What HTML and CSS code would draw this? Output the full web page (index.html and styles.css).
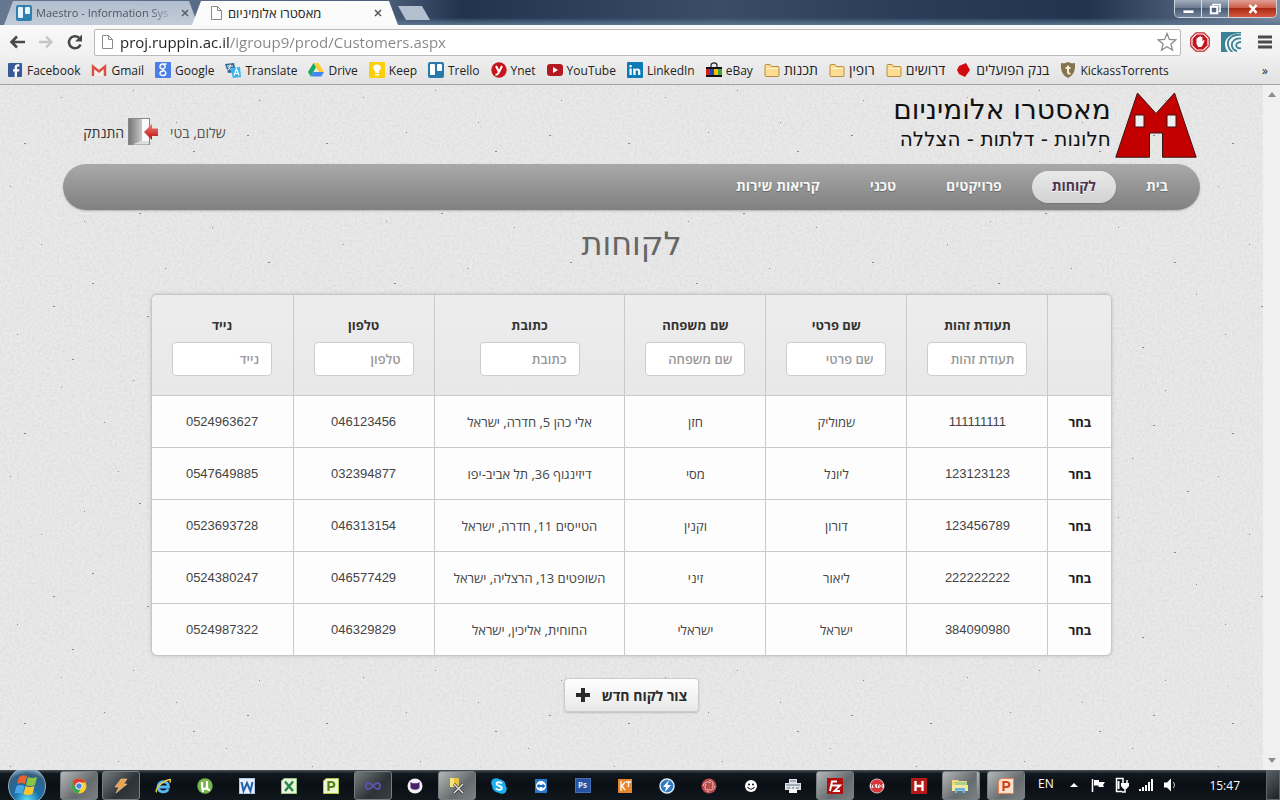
FILE: index.html
```html
<!DOCTYPE html>
<html lang="he">
<head>
<meta charset="utf-8">
<title>מאסטרו אלומיניום</title>
<link rel="stylesheet" href="styles.css">
</head>
<body>
<header class="browser">
  <div class="titlebar">
    <div class="tabs">
      <div class="tab">
        <svg class="icon" viewBox="0 0 16 16"><rect width="16" height="16" rx="2" fill="#2f80b0"/><rect x="2" y="2" width="5" height="11" rx="1" fill="#e9f3fa"/><rect x="9" y="2" width="5" height="7" rx="1" fill="#e9f3fa"/></svg>
        <span class="tab-title fade">Maestro - Information Sys</span>
        <button class="tab-close" aria-label="Close tab"><svg viewBox="0 0 8 8"><path d="M1 1l6 6M7 1L1 7" stroke="#5a5f68" stroke-width="1.6"/></svg></button>
      </div>
      <div class="tab tab-active">
        <svg class="icon" viewBox="0 0 16 16"><path d="M3.500 1.500h6l4 4v9h-10zM9.500 1.500v4h4" fill="#fff" stroke="#8a8a8a"/></svg>
        <span class="tab-title" dir="rtl">מאסטרו אלומיניום</span>
        <button class="tab-close" aria-label="Close tab"><svg viewBox="0 0 8 8"><path d="M1 1l6 6M7 1L1 7" stroke="#5a5a5a" stroke-width="1.6"/></svg></button>
      </div>
      <button class="new-tab" aria-label="New tab"></button>
    </div>
    <div class="window-buttons">
      <button aria-label="Minimize"><svg viewBox="0 0 14 12"><rect x="2" y="7" width="11" height="3.500" fill="#fff" stroke="#4a5468" stroke-width=".7"/></svg></button>
      <button aria-label="Restore"><svg viewBox="0 0 14 12"><path d="M5 3V1.500h7v7h-1.500" fill="none" stroke="#fff" stroke-width="1.600"/><rect x="2.800" y="3.800" width="6.500" height="6.500" fill="none" stroke="#fff" stroke-width="2"/></svg></button>
      <button class="window-close" aria-label="Close"><svg viewBox="0 0 14 12"><path d="M3.500 2l7 8M10.500 2l-7 8" stroke="#fff" stroke-width="2.600"/></svg></button>
    </div>
  </div>
  <div class="toolbar">
    <button class="tool" aria-label="Back"><svg viewBox="0 0 18 18"><path d="M17 9H4M9 3.500L3.500 9 9 14.500" fill="none" stroke="#484848" stroke-width="2.600"/></svg></button>
    <button class="tool" aria-label="Forward"><svg viewBox="0 0 18 18"><path d="M2 9h12M9 3.500L14.500 9 9 14.500" fill="none" stroke="#c6c6c6" stroke-width="2.400"/></svg></button>
    <button class="tool" aria-label="Reload"><svg viewBox="0 0 18 18"><path d="M14.500 11.500A6 6 0 1 1 13 4.800" fill="none" stroke="#484848" stroke-width="2.600"/><path d="M16 1.500v7H9z" fill="#484848"/></svg></button>
    <div class="address">
      <svg class="icon" viewBox="0 0 16 16"><path d="M2.500 1.500h6l4 4v9h-10zM8.500 1.500v4h4" fill="#fff" stroke="#8a8a8a"/></svg>
      <input class="url" type="text" aria-label="Address" value="proj.ruppin.ac.il/igroup9/prod/Customers.aspx">
      <button class="star" aria-label="Bookmark"><svg viewBox="0 0 20 20"><path d="M10 1.500l2.400 5.900 6.400.4-4.900 4.100 1.600 6.200-5.500-3.400-5.500 3.400 1.600-6.200L1.200 7.800l6.400-.4z" fill="#fff" stroke="#8d8d8d" stroke-width="1.300"/></svg></button>
    </div>
    <button class="ext" aria-label="AdBlock"><svg viewBox="0 0 20 20"><path d="M6 .8h8L19.200 6v8L14 19.200H6L.8 14V6z" fill="#fff" stroke="#b9242b" stroke-width="1.200"/><path d="M6.800 2.600h6.400l4.200 4.200v6.400l-4.200 4.200H6.800l-4.200-4.200V6.800z" fill="#c3161d"/><path d="M6.500 9.500V6.200h1.400V5h1.600v-.8h1.400V5h1.500v4.500l1.200-1.500 1 .6-2 4.600-1.400 1.800H8.300L6.500 12z" fill="#fff"/></svg></button>
    <button class="ext" aria-label="Extension"><svg viewBox="0 0 20 20"><rect width="20" height="20" fill="#f3f6f7"/><path d="M0 0h20v1C10 1 4 6 4 12c0 3 1 6 3 8H0z" fill="#3c8296"/><path d="M20 2.500C11 2.500 6 7 7 13c.5 3 2 5.500 4.500 7M20 6.500c-6-.5-10 3-9 7.500.5 2.500 2.500 4.500 5 5M20 10c-3.500 0-5.500 2-4.500 4.500.5 1.500 2.500 2 4.500 1.500" fill="none" stroke="#3c8296" stroke-width="1.800"/></svg></button>
    <button class="menu" aria-label="Menu"><svg viewBox="0 0 14 14"><path d="M0 2h14M0 7h14M0 12h14" stroke="#4a4a4a" stroke-width="2.800"/></svg></button>
  </div>
  <nav class="bookmarks" aria-label="Bookmarks">
    <a href="#"><svg class="icon" viewBox="0 0 16 16"><rect x="1" y="1" width="14" height="14" rx="1" fill="#3b5998"/><path d="M10 15V9.500h2l.4-2.300H10V5.700c0-.8.300-1.200 1.200-1.200h1.200V2.400C10 2 7.700 2.300 7.700 5.300v1.900H6v2.300h1.700V15z" fill="#fff"/></svg>Facebook</a>
    <a href="#"><svg class="icon" viewBox="0 0 16 16"><rect x="1" y="3" width="14" height="11" fill="#f2f0ef"/><path d="M2 14V4.500l6 5 6-5V14" fill="none" stroke="#d9503f" stroke-width="2.400"/></svg>Gmail</a>
    <a href="#"><svg class="icon" viewBox="0 0 16 16"><rect width="16" height="16" rx="1" fill="#4a7ee8"/><path d="M11.500 2H7.500C4.500 2 4 6.500 7 6.900l1 .2M7.800 2.200c3 0 3 4.700.2 4.700v1.200c4 1.500 3.500 5.400 0 5.400-4.200 0-4-4.500.5-4.500" fill="none" stroke="#fff" stroke-width="1.400"/></svg>Google</a>
    <a href="#"><svg class="icon" viewBox="0 0 16 16"><path d="M0 2l9-1 2 9-8 1z" fill="#35678f"/><path d="M2 4h6M5 2.500V4c0 2-1 3.500-3 4.500M3 5c1 2 3 3 5 3.500" fill="none" stroke="#fff"/><path d="M5 6l10-1 1 10-8 1z" fill="#3cb3ef"/><path d="M9 13.500L11.500 7l2.500 6.500M9.800 11.500h3.400" fill="none" stroke="#fff" stroke-width="1.200"/></svg>Translate</a>
    <a href="#"><svg class="icon" viewBox="0 0 16 16"><path d="M5.500 1h5l5.500 9h-5z" fill="#fc3"/><path d="M5.500 1L8 5.300 2.700 14.500 0 10z" fill="#16a765"/><path d="M5.300 10H16l-2.700 4.500H2.700z" fill="#4285f4"/></svg>Drive</a>
    <a href="#"><svg class="icon" viewBox="0 0 16 16"><rect width="16" height="16" rx="1" fill="#fbcf0a"/><path d="M8 2.500c5 0 4.500 5 2 6.500v2H6V9C3.500 7.500 3 2.500 8 2.500zM6 12h4v1.500H6z" fill="#fff"/></svg>Keep</a>
    <a href="#"><svg class="icon" viewBox="0 0 16 16"><rect width="16" height="16" rx="2" fill="#267baa"/><rect x="2" y="2" width="5" height="11" rx="1" fill="#fff"/><rect x="9" y="2" width="5" height="7" rx="1" fill="#fff"/></svg>Trello</a>
    <a href="#"><svg class="icon" viewBox="0 0 16 16"><circle cx="8" cy="8" r="7.700" fill="#c4161c"/><path d="M5 4l3 6M11 4L8 10c-1 2.500-2 3-3.500 2.800" fill="none" stroke="#fff" stroke-width="2"/></svg>Ynet</a>
    <a href="#"><svg class="icon" viewBox="0 0 16 16"><rect y="2" width="16" height="12" rx="3" fill="#b3191e"/><path d="M6 5l5 3-5 3z" fill="#fff"/></svg>YouTube</a>
    <a href="#"><svg class="icon" viewBox="0 0 16 16"><rect width="16" height="16" rx="1" fill="#0a7bb5"/><path d="M2.500 6.500h2.200V13H2.500zM2.500 3h2.200v2.200H2.500zM6.300 6.500h2v1c1-1.700 5-1.700 5 1.800V13h-2.200V9.700c0-2-2.500-2-2.500 0V13H6.300z" fill="#fff"/></svg>LinkedIn</a>
    <a href="#"><svg class="icon" viewBox="0 0 16 16"><path d="M5 6V3.500C5 0 11 0 11 3.500V6" fill="none" stroke="#222" stroke-width="1.200"/><path d="M0 5h16v3H0z" fill="#111"/><path d="M0 7h4v7H0z" fill="#c22"/><path d="M4 7h4v7H4z" fill="#23479f"/><path d="M8 7h4v7H8z" fill="#f2c714"/><path d="M12 7h4v7h-4z" fill="#4a9f37"/><path d="M0 13h16v2H0z" fill="#111"/></svg>eBay</a>
    <a href="#"><svg class="icon" viewBox="0 0 16 16"><path d="M1 13.500V3.500q0-1 1-1h4l1.500 2H14q1 0 1 1v8q0 1-1 1H2q-1 0-1-1z" fill="#fbdc91" stroke="#b98d43"/><path d="M2 6.500h12" stroke="#fff3cb"/></svg><span class="he" dir="rtl">תכנות</span></a>
    <a href="#"><svg class="icon" viewBox="0 0 16 16"><path d="M1 13.500V3.500q0-1 1-1h4l1.500 2H14q1 0 1 1v8q0 1-1 1H2q-1 0-1-1z" fill="#fbdc91" stroke="#b98d43"/><path d="M2 6.500h12" stroke="#fff3cb"/></svg><span class="he" dir="rtl">רופין</span></a>
    <a href="#"><svg class="icon" viewBox="0 0 16 16"><path d="M1 13.500V3.500q0-1 1-1h4l1.500 2H14q1 0 1 1v8q0 1-1 1H2q-1 0-1-1z" fill="#fbdc91" stroke="#b98d43"/><path d="M2 6.500h12" stroke="#fff3cb"/></svg><span class="he" dir="rtl">דרושים</span></a>
    <a href="#"><svg class="icon" viewBox="0 0 16 16"><path d="M3 4l7-3 4 7-5 7-6-3-2-4z" fill="#d2090f"/></svg><span class="he" dir="rtl">בנק הפועלים</span></a>
    <a href="#"><svg class="icon" viewBox="0 0 16 16"><path d="M8 0c3 1.500 5 1.500 7 1 .5 7-1 12-7 15C2 13 .5 8 1 1c2 .5 4 .5 7-1z" fill="#85754d"/><path d="M8 3.500v7q0 1.500 2.500 1M5.500 6h5" fill="none" stroke="#f3ecd6" stroke-width="2"/></svg>KickassTorrents</a>
    <button class="overflow" aria-label="More bookmarks">»</button>
  </nav>
</header>

<div class="viewport">
  <svg class="paper" aria-hidden="true">
    <defs>
      <filter id="grain" x="0" y="0" width="100%" height="100%"><feTurbulence type="fractalNoise" baseFrequency=".4" numOctaves="2" seed="4"/><feColorMatrix values="0 0 0 0 .5  0 0 0 0 .5  0 0 0 0 .5  .5 0 0 0 -.18"/></filter>
      <pattern id="specks" width="302" height="290" patternUnits="userSpaceOnUse">
        <path d="M24 58.500h2M61 12.500h1M92 198.500h2M118 96.500h1M147 231.500h2M176 37.500h1M193 66.500h2M212 142.500h1M236 262.500h2M259 15.500h1M281 116.500h2M41 159.500h1M72 274.500h2M133 5.500h1M165 183.500h1M290 209.500h1M10 101.500h1M53 221.500h2M104 47.500h1M139 128.500h2M199 217.500h1M226 83.500h1M268 177.500h2M17 249.500h1M84 136.500h1M187 279.500h1M247 50.500h2" stroke="#888"/>
      </pattern>
    </defs>
    <rect width="100%" height="100%" filter="url(#grain)"/>
    <rect width="100%" height="100%" fill="url(#specks)"/>
  </svg>
  <main class="page" dir="rtl">
    <div class="masthead">
      <a class="brand" href="#">
        <svg class="logo" viewBox="0 0 82 66"><path d="M.8 65.200L22.500 1 41 21.500 59.500 1l21.700 64.200H47.500V41h-13v24.200z" fill="#c30000" stroke="#3c1414"/><rect x="20" y="23" width="9" height="12" fill="#efefef" stroke="#3c1414"/><rect x="52" y="23" width="9" height="12" fill="#efefef" stroke="#3c1414"/></svg>
        <span class="brand-text"><span class="brand-name">מאסטרו אלומיניום</span><span class="brand-tag">חלונות - דלתות - הצללה</span></span>
      </a>
      <div class="user">
        <span class="hello">שלום, בטי</span>
        <a class="logout" href="#">
          <svg viewBox="0 0 30 28"><defs><linearGradient id="door"><stop offset="0" stop-color="#777"/><stop offset="1" stop-color="#c8c8c8"/></linearGradient><linearGradient id="arrow" x2="0" y2="1"><stop offset="0" stop-color="#f27a72"/><stop offset="1" stop-color="#b80d0d"/></linearGradient></defs><rect x=".5" y=".5" width="21" height="26" fill="#fafafa" stroke="#888"/><path d="M1 1h13v22L5 26.500H1z" fill="url(#door)"/><path d="M5 26.500L14 23h7v3.500z" fill="#ddd"/><path d="M16 14l8-8v4.500h6v7.500h-6v4z" fill="url(#arrow)"/></svg>
          התנתק</a>
      </div>
    </div>
    <nav class="site-nav">
      <a href="#">בית</a>
      <a class="current" href="#">לקוחות</a>
      <a href="#">פרויקטים</a>
      <a href="#">טכני</a>
      <a href="#">קריאות שירות</a>
    </nav>
    <h1>לקוחות</h1>
    <table class="customers">
      <colgroup><col class="col-pick"><col class="col-data"><col class="col-data"><col class="col-data"><col><col class="col-data"><col class="col-data"></colgroup>
      <thead>
        <tr>
          <th></th>
          <th><label for="f-id">תעודת זהות</label><input id="f-id" type="text" placeholder="תעודת זהות"></th>
          <th><label for="f-first">שם פרטי</label><input id="f-first" type="text" placeholder="שם פרטי"></th>
          <th><label for="f-last">שם משפחה</label><input id="f-last" type="text" placeholder="שם משפחה"></th>
          <th><label for="f-addr">כתובת</label><input id="f-addr" type="text" placeholder="כתובת"></th>
          <th><label for="f-phone">טלפון</label><input id="f-phone" type="text" placeholder="טלפון"></th>
          <th><label for="f-cell">נייד</label><input id="f-cell" type="text" placeholder="נייד"></th>
        </tr>
      </thead>
      <tbody>
        <tr><td><a href="#">בחר</a></td><td>111111111</td><td>שמוליק</td><td>חזן</td><td>אלי כהן 5, חדרה, ישראל</td><td>046123456</td><td>0524963627</td></tr>
        <tr><td><a href="#">בחר</a></td><td>123123123</td><td>ליונל</td><td>מסי</td><td>דיזינגוף 36, תל אביב-יפו</td><td>032394877</td><td>0547649885</td></tr>
        <tr><td><a href="#">בחר</a></td><td>123456789</td><td>דורון</td><td>וקנין</td><td>הטייסים 11, חדרה, ישראל</td><td>046313154</td><td>0523693728</td></tr>
        <tr><td><a href="#">בחר</a></td><td>222222222</td><td>ליאור</td><td>זיני</td><td>השופטים 13, הרצליה, ישראל</td><td>046577429</td><td>0524380247</td></tr>
        <tr><td><a href="#">בחר</a></td><td>384090980</td><td>ישראל</td><td>ישראלי</td><td>החוחית, אליכין, ישראל</td><td>046329829</td><td>0524987322</td></tr>
      </tbody>
    </table>
    <button class="create">צור לקוח חדש<svg viewBox="0 0 14 14"><path d="M7 0v14M0 7h14" stroke="#2b2b2b" stroke-width="4"/></svg></button>
  </main>
  <div class="scrollbar" aria-hidden="true">
    <svg viewBox="0 0 8 5"><path d="M0 5l4-5 4 5z" fill="#8d8d8d"/></svg>
    <svg viewBox="0 0 8 5"><path d="M0 0l4 5 4-5z" fill="#8d8d8d"/></svg>
  </div>
</div>

<footer class="taskbar">
  <button class="start" aria-label="Start"><svg viewBox="0 0 40 40"><defs><radialGradient id="orb" cy=".9" r=".9"><stop offset="0" stop-color="#5fe3ff"/><stop offset=".4" stop-color="#1c6fa8"/><stop offset=".8" stop-color="#355f80"/><stop offset="1" stop-color="#a9c4d8"/></radialGradient></defs><circle cx="20" cy="20" r="18.500" fill="url(#orb)" stroke="#8fb0c6"/><path d="M12 11q4-3 8-1l-2 8q-4-2-8 0z" fill="#e8602c"/><path d="M21 11q4 2 9 0l-2 8q-5 2-9 0z" fill="#8cc63e"/><path d="M9.500 20q4-2 8 0l-2 8q-4-2-8 0z" fill="#4aa5e4"/><path d="M18.500 20q4 2 9 0l-2 8q-5 2-9 0z" fill="#fcc52c"/></svg></button>
  <div class="tasks">
    <button class="open bright" aria-label="Chrome"><svg viewBox="0 0 16 16"><circle cx="8" cy="8" r="7.500" fill="#fbd02c"/><path d="M1.500 4.200A7.500 7.500 0 0 1 14.500 4.500H8L5 10z" fill="#dc3f32"/><path d="M1.500 4.200A7.500 7.500 0 0 0 7 15.400L10.500 10H5z" fill="#3ea450"/><circle cx="8" cy="8" r="3.300" fill="#4b87e0" stroke="#fff"/></svg></button>
    <button class="open" aria-label="Winamp"><svg viewBox="0 0 16 16"><path d="M8 1h6l-3.500 5H14L3 15l3-6H2z" fill="#eda251" stroke="#f8cf9a" stroke-width=".6"/></svg></button>
    <button aria-label="Internet Explorer"><svg viewBox="0 0 16 16"><path d="M4 9h9.500c.3-7-10.500-7-10.500 0 0 6 8.500 6 10 2" fill="none" stroke="#55b8ef" stroke-width="2.800"/><path d="M2 14C-1 14 4 4 15 1.500c1.500 0 .5 2-.5 3" fill="none" stroke="#f5cb40" stroke-width="1.400"/></svg></button>
    <button aria-label="uTorrent"><svg viewBox="0 0 16 16"><circle cx="8" cy="8" r="7.700" fill="#76b64c"/><path d="M5 4v4c0 4 5 4 5 0V3v6q0 3 3 3M5 8l1 6" fill="none" stroke="#fff" stroke-width="2.200"/></svg></button>
    <button aria-label="Word"><svg viewBox="0 0 16 16"><rect x=".5" y=".5" width="15" height="15" fill="#e9f0fa" stroke="#b4c7e4"/><path d="M2.500 4l2 9L8 5l3.500 8 2-9" fill="none" stroke="#2461ad" stroke-width="2"/></svg></button>
    <button aria-label="Excel"><svg viewBox="0 0 16 16"><path d="M3 .5h12.500v15H.5V3z" fill="#e5f3df" stroke="#9ac77c"/><path d="M4 3.500l8 9.500M12 3.500L4 13" stroke="#2a8745" stroke-width="2.400"/></svg></button>
    <button aria-label="Project"><svg viewBox="0 0 16 16"><path d="M3 .5h12.500v15H.5V3z" fill="#eff5cf" stroke="#aec63c"/><path d="M5.500 13V4h2.800c4 0 4 5 0 5H6" fill="none" stroke="#4f8519" stroke-width="2.200"/></svg></button>
    <button class="open" aria-label="Visual Studio"><svg viewBox="0 0 16 16"><path d="M8 8C5 4 1 4 1 8s4 4 7 0 7-4 7 0-4 4-7 0z" fill="none" stroke="#5c50a9" stroke-width="2"/></svg></button>
    <button aria-label="GitHub"><svg viewBox="0 0 16 16"><circle cx="8" cy="8" r="7.500" fill="#f4eef7"/><path d="M3.500 4l2 1.200h5l2-1.200v5.500c-1 3-8 3-9 0z" fill="#45246a"/></svg></button>
    <button class="open bright" aria-label="SQL tools"><svg viewBox="0 0 16 16"><path d="M1 0h9v9H1z" fill="#e8c23b"/><path d="M1 0h4v9H1z" fill="#f7e27d"/><path d="M5 6l9 9M14 6l-9 9" stroke="#333" stroke-width="3"/><path d="M5 6l9 9M14 6l-9 9" stroke="#e2e2e2" stroke-width="1.500"/></svg></button>
    <button aria-label="Skype"><svg viewBox="0 0 16 16"><circle cx="5" cy="5" r="4.800" fill="#1aaff0"/><circle cx="11" cy="11" r="4.800" fill="#1aaff0"/><circle cx="8" cy="8" r="6.800" fill="#1aaff0"/><path d="M10.800 5.500C10 3.800 5.500 3.700 5.500 6s5.300 1.500 5.300 4-5 2.400-5.800.3" fill="none" stroke="#fff" stroke-width="1.800"/></svg></button>
    <button aria-label="TeamViewer"><svg viewBox="0 0 16 16"><path d="M2 1h12v14H2z" fill="#2779c9"/><circle cx="8" cy="8" r="5" fill="#fff"/><path d="M3.500 8L6.500 5.500V7h3V5.500l3 2.500-3 2.500V9h-3v1.500z" fill="#176bc1"/></svg></button>
    <button aria-label="Photoshop"><svg viewBox="0 0 16 16"><rect x=".5" y=".5" width="15" height="14" fill="#28539e" stroke="#476fb3"/><text x="3" y="10" class="glyph-small">Ps</text></svg></button>
    <button aria-label="KT"><svg viewBox="0 0 16 16"><rect x="1" y="1" width="14" height="14" fill="#e8862a"/><path d="M4 3v10M8 4L5 8l3 4M9 4h5M11.500 4v5" stroke="#fff" stroke-width="1.300" fill="none"/></svg></button>
    <button aria-label="Daemon Tools"><svg viewBox="0 0 16 16"><circle cx="8" cy="8" r="7" fill="#2e7bc4" stroke="#d9e8f5" stroke-width="1.500"/><path d="M10 2L4 9h3l-1 5 6-7H8.500z" fill="#fff"/></svg></button>
    <button aria-label="Camera"><svg viewBox="0 0 16 16"><circle cx="8" cy="8" r="7.500" fill="#b9494a"/><path d="M8 2c4 1 5 4 3 8M14 8c-1 4-5 5-8 3M8 14c-4-1-5-5-3-8M2 8c1-4 5-5 8-3" fill="none" stroke="#edc9c7"/></svg></button>
    <button aria-label="Messenger"><svg viewBox="0 0 16 16"><circle cx="8" cy="8" r="6" fill="#fff"/><circle cx="6" cy="6.500" r="1" fill="#111"/><circle cx="10" cy="6.500" r="1" fill="#111"/><path d="M4.500 9q3.500 4.500 7 0" fill="none" stroke="#111" stroke-width="1.200"/></svg></button>
    <button aria-label="Printer"><svg viewBox="0 0 16 16"><path d="M4 1h8v4h4v7H0V5h4z" fill="#dde3e8"/><path d="M1 7h14M5 3h6M2 10h3M7 10h2M11 10h3" stroke="#69757f"/><path d="M4 11h8v4H4z" fill="#f7f7f7"/></svg></button>
    <button class="open bright" aria-label="FileZilla"><svg viewBox="0 0 16 16"><rect width="16" height="16" fill="#b20e0e"/><path d="M3 13L5 3.500h5M4.500 7.500h4M8 7.500h5L7.500 13H13" fill="none" stroke="#fff" stroke-width="1.900"/></svg></button>
    <button aria-label="Nero"><svg viewBox="0 0 16 16"><circle cx="8" cy="8" r="7" fill="#d8363c" stroke="#dcbcbc"/><path d="M1 6h14v4H1z" fill="#f5e3e3"/><path d="M2.500 9.500v-3h2v3M6.500 6.500h-1v3h1.500M8.500 9.500v-3H10M11 6.500h2v3h-2z" stroke="#b31c22" fill="none" stroke-width=".8"/></svg></button>
    <button aria-label="H"><svg viewBox="0 0 16 16"><rect width="16" height="16" fill="#b51a1a"/><path d="M4.500 3v10M11.500 3v10M4.500 8h7" stroke="#fff" stroke-width="2.300"/></svg></button>
    <button class="open bright stacked" aria-label="Explorer"><svg viewBox="0 0 16 16"><path d="M0 2h6l1 1h8v10H0z" fill="#efd77a"/><path d="M3 4h12v6H3z" fill="#a8d18d"/><path d="M0 7h16v6H0z" fill="#f6e79b"/><path d="M3 15v-5h10v5h-2.500v-2.500h-5V15z" fill="#62b4e4"/></svg></button>
    <button class="open bright" aria-label="PowerPoint"><svg viewBox="0 0 16 16"><path d="M3 .5h12.500v15H.5V3z" fill="#fbe0d0" stroke="#e58154"/><path d="M5.500 13V4h2.800c4 0 4 5 0 5H6" fill="none" stroke="#ce4618" stroke-width="2.200"/></svg></button>
  </div>
  <div class="tray">
    <span class="lang">EN</span>
    <svg viewBox="0 0 16 16"><path d="M4 10l4-4 4 4z" fill="#fff"/></svg>
    <svg viewBox="0 0 16 16"><path d="M2.500 2v13" stroke="#fff" stroke-width="1.500"/><path d="M4 3h5v2h6l-2 3 1 2H8.500V8.500H4z" fill="#fff"/></svg>
    <svg viewBox="0 0 16 16"><path d="M9 3V1.500H2.500v13H8" fill="none" stroke="#fff" stroke-width="1.500"/><path d="M4.500 4v8" stroke="#fff" stroke-width="2"/><path d="M9 3v3M13 3v3M11 11v4H8" stroke="#fff" stroke-width="1.500" fill="none"/><path d="M7 6h8v3l-2.500 3h-3L7 9z" fill="#fff"/></svg>
    <svg viewBox="0 0 16 16"><path d="M2 14v-2M5 14v-4M8 14V8M11 14V5M14 14V2" stroke="#fff" stroke-width="2"/></svg>
    <svg viewBox="0 0 16 16"><path d="M2 5.500h3l4-4v13l-4-4H2z" fill="#fff"/><path d="M11.500 5q2 3 0 6" fill="none" stroke="#ccc"/></svg>
  </div>
  <time class="clock">15:47</time>
  <button class="show-desktop" aria-label="Show desktop"></button>
</footer>
</body>
</html>
```
FILE: styles.css
```css
* { box-sizing: border-box; }
body {
  margin: 0;
  min-height: 100vh;
  display: flex;
  flex-direction: column;
  font-family: "Open Sans", "Liberation Sans", sans-serif;
  font-size: 12px;
  color: #444;
}
button { font: inherit; border: 0; padding: 0; background: none; color: inherit; }
a { color: inherit; text-decoration: none; }
svg { display: block; flex: none; }
.icon { width: 16px; height: 16px; }

/* browser frame */
.titlebar {
  height: 25px;
  display: flex;
  justify-content: space-between;
  background:
    linear-gradient(transparent 70%, #5c7592),
    linear-gradient(90deg, #66788f, #4c5f7b 30%, #22334d 36%, #2b3d58 44%, #3b4d66 56%, #2b3d57 70%, #21334d 85%, #55677f 94%, #7d8da1);
}
.tabs { display: flex; padding-left: 4px; }
.tab {
  width: 194px;
  padding: 0 9px 0 12px;
  display: flex;
  align-items: center;
  gap: 4px;
  color: #4d5560;
  background: linear-gradient(#b1bdce, #c2ccd9);
  clip-path: polygon(9px 1px, calc(100% - 9px) 1px, 100% 100%, 0 100%);
}
.tab-active {
  width: 206px;
  margin-left: -6px;
  padding: 0 16px;
  color: #222;
  background: #fbfbfb;
}
.tab-title { white-space: nowrap; }
.tab-active .tab-title { font-size: 13px; }
.tab-close { flex: none; width: 8px; height: 8px; margin-left: auto; }
.tab .fade { font-size: 11px; mask-image: linear-gradient(90deg, #000 85%, #0005); }
.new-tab {
  width: 32px;
  height: 14px;
  margin-top: 6px;
  background: #b3bfce;
  clip-path: polygon(0 0, 24px 0, 100% 100%, 8px 100%);
}
.window-buttons {
  display: flex;
  align-self: flex-start;
  height: 18px;
  margin-right: 3px;
  border: 1px solid #ccd4de;
  border-top: 0;
  border-radius: 0 0 5px 5px;
  overflow: hidden;
}
.window-buttons button {
  width: 27px;
  display: flex;
  align-items: center;
  justify-content: center;
  background: linear-gradient(#a2adbc, #6f7d92 45%, #4a5b74 50%, #74849b);
  border-right: 1px solid #d4dbe4;
}
.window-buttons svg { width: 14px; height: 12px; }
.window-buttons .window-close {
  width: 47px;
  border: 0;
  background: linear-gradient(#e0a094, #cf604b 45%, #ac2a14 50%, #d5593e);
}
.toolbar {
  height: 33px;
  padding: 0 8px;
  display: flex;
  align-items: center;
  gap: 11px;
  background: linear-gradient(#f9f9f9, #f0f0f0);
}
.tool svg { width: 18px; height: 18px; }
.address {
  flex: 1;
  height: 27px;
  margin: 1px -2px 0 -1px;
  padding: 0 3px 0 5px;
  display: flex;
  align-items: center;
  gap: 4px;
  background: #fff;
  border: 1px solid #bcb9b2;
  border-radius: 2px;
}
.url {
  flex: 1;
  min-width: 0;
  height: 25px;
  border: 0;
  padding: 0;
  outline: 0;
  font: 15px "Open Sans", sans-serif;
  color: transparent;
  background: linear-gradient(90deg, #222 109px, #858585 109px);
  background-clip: text;
}
.star svg, .ext svg { width: 20px; height: 20px; }
.ext + .ext { margin-right: 6px; }
.menu svg { width: 14px; height: 14px; }
.bookmarks {
  height: 27px;
  padding: 0 12px 2px 7px;
  display: flex;
  align-items: center;
  gap: 11px;
  color: #222;
  white-space: nowrap;
  background: linear-gradient(#efefef, #e2e2e2);
  border-bottom: 1px solid #a3a3a3;
}
.bookmarks a { display: flex; align-items: center; gap: 4px; }
.he { font-size: 14px; line-height: 18px; }
.overflow { margin-left: auto; }

/* web page */
.viewport {
  flex: 1;
  display: flex;
  position: relative;
  background: #e9e9e9;
}
.paper { position: absolute; inset: 0; width: 100%; height: 100%; }
.page {
  flex: 1;
  position: relative;
  display: flex;
  flex-direction: column;
  align-items: center;
}
.scrollbar {
  position: relative;
  width: 17px;
  padding: 7px 0;
  display: flex;
  flex-direction: column;
  justify-content: space-between;
  align-items: center;
  background: #f0f0f0;
}
.scrollbar svg { width: 8px; height: 5px; }
.masthead {
  width: 90%;
  height: 79px;
  padding: 7px 3px 0 20px;
  display: flex;
  justify-content: space-between;
  align-items: flex-start;
}
.brand { display: flex; gap: 4px; color: #111; }
.logo { width: 82px; height: 66px; }
.brand-text { display: flex; flex-direction: column; font-family: "DejaVu Sans", sans-serif; }
.brand-name { font-size: 28px; line-height: 36px; }
.brand-tag { font-size: 20px; line-height: 22px; }
.user { display: flex; align-items: center; gap: 12px; margin-top: 26px; font-size: 14px; color: #555; }
.logout { display: flex; align-items: center; gap: 4px; color: #333; }
.logout svg { width: 30px; height: 28px; }
.site-nav {
  width: 90%;
  height: 46px;
  padding: 0 12px;
  display: flex;
  align-items: center;
  gap: 10px;
  border-radius: 23px;
  background: linear-gradient(#a9a9a9, #808080);
  box-shadow: 0 1px 2px #8888;
  font-size: 14px;
  font-weight: 700;
  color: #f6f6f6;
}
.site-nav a { height: 32px; padding: 0 20px; line-height: 30px; border-radius: 16px; text-shadow: 0 1px 1px #666; }
.site-nav .current {
  color: #4b3350;
  background: linear-gradient(#e9e9e9, #d2d2d2);
  box-shadow: 0 1px 1px #777;
  text-shadow: 0 1px 0 #fff;
}
h1 {
  margin: 10px 0 27px;
  font-family: "DejaVu Sans", sans-serif;
  font-size: 32px;
  line-height: 48px;
  font-weight: 400;
  color: #666;
}
.customers {
  width: 76%;
  table-layout: fixed;
  border-collapse: separate;
  border-spacing: 0;
  background: #fdfdfd;
  border-radius: 5px;
  box-shadow: 0 0 0 1px #c6c6c6, 0 0 4px #aaa;
  overflow: hidden;
}
.col-pick { width: 64px; }
.col-data { width: 141px; }
th { height: 100px; padding: 2px 0 0; background: linear-gradient(#ededed, #e8e8e8); color: #333; }
th, td { border-left: 1px solid #c9c9c9; text-align: center; }
th:last-child, td:last-child { border-left: 0; }
th label { display: block; margin-bottom: 8px; font-size: 13px; line-height: 18px; }
th input {
  width: 100px;
  height: 34px;
  padding: 0 12px;
  font: 600 13px "Open Sans", sans-serif;
  border: 1px solid #ccc;
  border-radius: 4px;
  background: #fff;
}
th input::placeholder { color: #999; opacity: 1; }
td { height: 52px; padding: 0; border-top: 1px solid #c9c9c9; font-size: 13px; }
td:nth-child(2), td:nth-child(n + 6) { font-family: "Liberation Sans", sans-serif; }
td a { font-weight: 700; color: #222; }
.create {
  height: 34px;
  margin-top: 23px;
  padding: 0 11px;
  display: flex;
  align-items: center;
  gap: 12px;
  font-size: 14px;
  font-weight: 700;
  color: #2b2b2b;
  background: linear-gradient(#fff, #e8e8e8);
  border: 1px solid #ccc;
  border-radius: 4px;
  box-shadow: 0 1px 2px #bbb;
}
.create svg { width: 14px; height: 14px; }

/* taskbar */
.taskbar {
  height: 30px;
  display: flex;
  background: linear-gradient(#4a5358, #11181d 12%, #0a0f14 50%, #10181d);
  color: #fff;
  overflow: clip;
}
.start { width: 60px; padding-left: 7px; }
.start svg { width: 40px; height: 40px; margin-top: -4px; }
.tasks { display: flex; gap: 4px; padding-top: 1px; }
.tasks button { width: 38px; display: flex; align-items: center; justify-content: center; border-radius: 3px; }
.tasks svg { width: 16px; height: 16px; }
.tasks .open { border: 1px solid #777e82; background: linear-gradient(135deg, #777c7f, #2c3337 60%, #3a4145); }
.tasks .bright { background: linear-gradient(135deg, #b5b8b8, #666b6d 60%, #7b8082); }
.tasks .stacked { margin-right: 3px; border-right: 4px double #777e82; }
.glyph-small { font: 700 8px "Open Sans", sans-serif; fill: #dcecff; }
.tray { display: flex; align-items: center; gap: 8px; margin-left: 13px; }
.tray svg { width: 16px; height: 16px; }
.lang { margin-right: 4px; padding-bottom: 4px; }
.clock { margin-left: auto; align-self: center; }
.show-desktop { width: 14px; margin-left: 26px; border: 1px solid #5e666b; background: linear-gradient(135deg, #596167, #1b2227); }
```
